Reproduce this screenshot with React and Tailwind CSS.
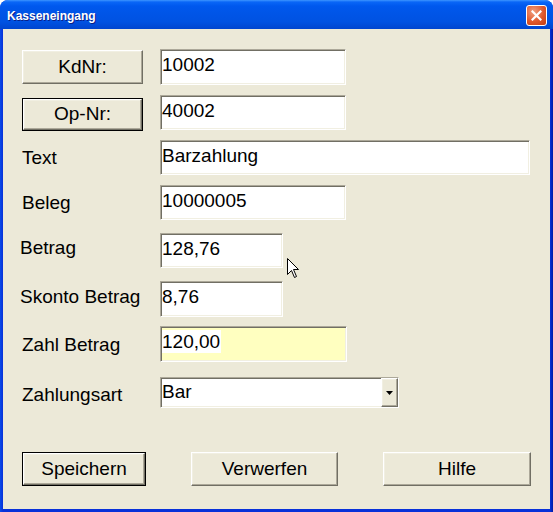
import React from 'react'

// sunken XP edit border and raised button border
const sunken = 'border border-t-[#aca899] border-l-[#aca899] border-r-white border-b-white shadow-[inset_1px_1px_0_#716f64,inset_-1px_-1px_0_#f1efe2]'
const raised = 'border border-t-white border-l-white border-r-[#716f64] border-b-[#716f64] shadow-[inset_-1px_-1px_0_#aca899,inset_1px_1px_0_#f1efe2]'

function Btn({ children, className = '', isDefault }) {
  if (isDefault) {
    return (
      <div className={`border border-black ${className}`}>
        <div className={`w-full h-full bg-[#ece9d8] flex items-center justify-center text-[19px] text-black ${raised}`}>{children}</div>
      </div>
    )
  }
  return (
    <div className={`bg-[#ece9d8] flex items-center justify-center text-[19px] text-black ${raised} ${className}`}>{children}</div>
  )
}

function Field({ value, className = '' }) {
  return (
    <div className={`bg-white pl-[1px] pt-[5px] text-[19px] leading-[20px] text-black whitespace-nowrap ${sunken} ${className}`}>{value}</div>
  )
}

function Label({ children, className = '' }) {
  return <div className={`w-[157px] shrink-0 text-[19px] leading-[20px] text-black ${className}`}>{children}</div>
}

export default function App() {
  return (
    <div className="w-[553px] h-[512px] relative flex flex-col rounded-t-[8px] overflow-hidden bg-[linear-gradient(to_right,#0a4be8,#0831d9_3px,#0831d9_550px,#0019a6)] font-['Liberation_Sans',Arial,sans-serif]">
      {/* title bar */}
      <div className="h-[29px] shrink-0 flex items-center pl-[7px] pr-[6px] bg-[linear-gradient(to_bottom,#3d95ff_0px,#0a66f7_2px,#0058ee_6px,#0055e7_45%,#0052e2_75%,#0045cf_100%)]">
        <span className="text-white font-bold text-[12px] leading-[14px] mt-[2px] [text-shadow:1px_1px_#0a1f88]">Kasseneingang</span>
        <div className="ml-auto mt-[1px] w-[21px] h-[21px] rounded-[3px] border border-white bg-[radial-gradient(circle_at_35%_30%,#f0a080,#e0582c_55%,#c23d13)] flex items-center justify-center">
          <svg width="11" height="11" viewBox="0 0 11 11">
            <path d="M1.5 1.5 L9.5 9.5 M9.5 1.5 L1.5 9.5" stroke="white" strokeWidth="2.2" strokeLinecap="square" />
          </svg>
        </div>
      </div>

      {/* client area */}
      <div className="flex-1 mx-[3px] mb-[3px] bg-[#ece9d8] flex flex-col">
        <div className="flex h-[36px] mt-[20px]">
          <div className="w-[157px] shrink-0 pl-[19px] pt-[1px]">
            <Btn className="w-[121px] h-[34px]">KdNr:</Btn>
          </div>
          <Field value="10002" className="w-[186px] h-[36px]" />
        </div>

        <div className="flex h-[35px] mt-[10px]">
          <div className="w-[157px] shrink-0 pl-[19px] pt-[3px]">
            <Btn isDefault className="w-[121px] h-[33px]">Op-Nr:</Btn>
          </div>
          <Field value="40002" className="w-[186px] h-[35px]" />
        </div>

        <div className="flex h-[35px] mt-[10px]">
          <Label className="pl-[19px] pt-[8px]">Text</Label>
          <Field value="Barzahlung" className="w-[370px] h-[35px]" />
        </div>

        <div className="flex h-[35px] mt-[10px]">
          <Label className="pl-[19px] pt-[8px]">Beleg</Label>
          <Field value="10000005" className="w-[186px] h-[35px]" />
        </div>

        <div className="flex h-[35px] mt-[13px]">
          <Label className="pl-[17px] pt-[5px]">Betrag</Label>
          <Field value="128,76" className="w-[123px] h-[35px]" />
        </div>

        <div className="flex h-[36px] mt-[13px]">
          <Label className="pl-[17px] pt-[6px]">Skonto Betrag</Label>
          <Field value="8,76" className="w-[123px] h-[36px]" />
        </div>

        <div className="flex h-[36px] mt-[9px]">
          <Label className="pl-[19px] pt-[9px]">Zahl Betrag</Label>
          <div className={`w-[187px] h-[36px] bg-[#ffffc0] pl-[1px] pt-[1px] text-[19px] text-black ${sunken}`}>
            <span className="inline-block bg-white leading-[23px] pr-[1px]">120,00</span>
          </div>
        </div>

        <div className="flex h-[31px] mt-[15px]">
          <Label className="pl-[19px] pt-[8px]">Zahlungsart</Label>
          <div className={`w-[239px] h-[31px] bg-white flex ${sunken}`}>
            <div className="flex-1 pl-[1px] pt-[4px] text-[19px] leading-[20px] text-black">Bar</div>
            <div className={`w-[17px] h-full bg-[#ece9d8] flex items-center justify-center ${raised}`}>
              <svg width="7" height="4" viewBox="0 0 7 4">
                <path d="M0 0 H7 L3.5 4 Z" fill="black" />
              </svg>
            </div>
          </div>
        </div>

        <div className="flex h-[34px] mt-[44px]">
          <Btn isDefault className="ml-[19px] w-[124px] h-[34px]">Speichern</Btn>
          <Btn className="ml-[45px] w-[147px] h-[34px]">Verwerfen</Btn>
          <Btn className="ml-[45px] w-[148px] h-[34px]">Hilfe</Btn>
        </div>
      </div>

      {/* mouse pointer */}
      <svg className="absolute left-[287px] top-[258px]" width="13" height="21" viewBox="0 0 13 21">
        <path d="M0.5 0.5 V16.5 L4.5 12.5 L7.5 19.5 L9.5 18.5 L6.5 11.5 H11.5 Z" fill="white" stroke="black" strokeWidth="1" />
      </svg>
    </div>
  )
}
